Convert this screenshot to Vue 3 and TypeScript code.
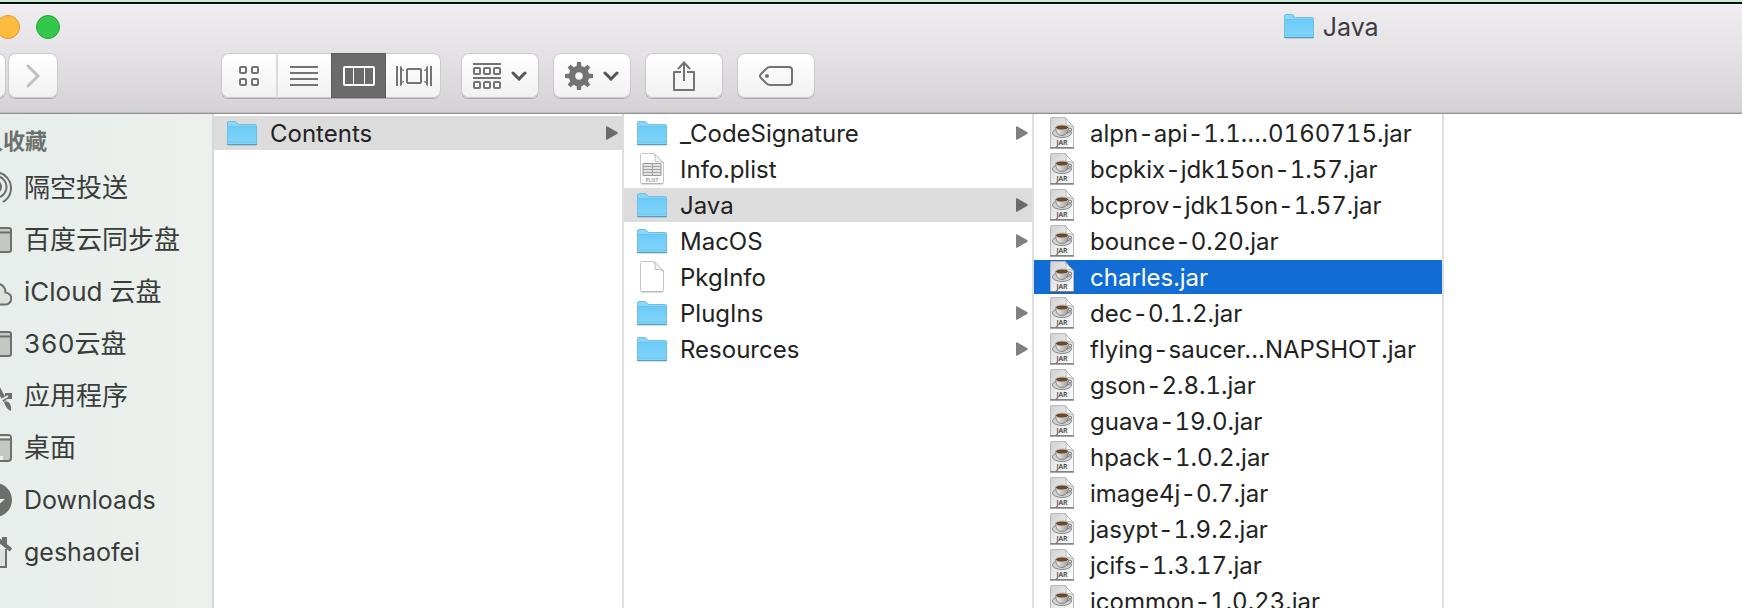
<script setup lang="ts">
import { ref } from 'vue'

type Kind = 'folder' | 'plist' | 'blank' | 'jar'
interface Entry {
  name: string
  kind: Kind
}
interface Column {
  label: string
  selected: string
  active: boolean
  entries: Entry[]
}
interface Place {
  name: string
  icon: 'airdrop' | 'drive' | 'cloud' | 'apps' | 'desktop' | 'downloads' | 'home'
  latin?: boolean
}

const places: Place[] = [
  { name: '隔空投送', icon: 'airdrop' },
  { name: '百度云同步盘', icon: 'drive' },
  { name: 'iCloud 云盘', icon: 'cloud' },
  { name: '360云盘', icon: 'drive' },
  { name: '应用程序', icon: 'apps' },
  { name: '桌面', icon: 'desktop' },
  { name: 'Downloads', icon: 'downloads', latin: true },
  { name: 'geshaofei', icon: 'home', latin: true },
]

const jars = [
  'alpn-api-1.1.…0160715.jar',
  'bcpkix-jdk15on-1.57.jar',
  'bcprov-jdk15on-1.57.jar',
  'bounce-0.20.jar',
  'charles.jar',
  'dec-0.1.2.jar',
  'flying-saucer…NAPSHOT.jar',
  'gson-2.8.1.jar',
  'guava-19.0.jar',
  'hpack-1.0.2.jar',
  'image4j-0.7.jar',
  'jasypt-1.9.2.jar',
  'jcifs-1.3.17.jar',
  'jcommon-1.0.23.jar',
]

const columns = ref<Column[]>([
  {
    label: 'Charles',
    selected: 'Contents',
    active: false,
    entries: [{ name: 'Contents', kind: 'folder' }],
  },
  {
    label: 'Contents',
    selected: 'Java',
    active: false,
    entries: [
      { name: '_CodeSignature', kind: 'folder' },
      { name: 'Info.plist', kind: 'plist' },
      { name: 'Java', kind: 'folder' },
      { name: 'MacOS', kind: 'folder' },
      { name: 'PkgInfo', kind: 'blank' },
      { name: 'PlugIns', kind: 'folder' },
      { name: 'Resources', kind: 'folder' },
    ],
  },
  {
    label: 'Java',
    selected: 'charles.jar',
    active: true,
    entries: jars.map((name): Entry => ({ name, kind: 'jar' })),
  },
])

const teeth = [0, 45, 90, 135, 180, 225, 270, 315]
</script>

<template>
  <div class="screen">
    <svg class="defs" width="0" height="0" aria-hidden="true">
      <defs>
        <linearGradient id="folderFill" x1="0" y1="0" x2="0" y2="1">
          <stop offset="0" stop-color="#6ccbf7" />
          <stop offset="1" stop-color="#82d5fa" />
        </linearGradient>
        <linearGradient id="paperFill" x1="0" y1="0" x2="1" y2="1">
          <stop offset="0" stop-color="#cfcfcf" />
          <stop offset="0.6" stop-color="#f0f0f0" />
          <stop offset="1" stop-color="#ffffff" />
        </linearGradient>
        <linearGradient id="cupFill" x1="0" y1="0" x2="1" y2="0">
          <stop offset="0" stop-color="#f4f4f4" />
          <stop offset="1" stop-color="#9a9a9a" />
        </linearGradient>
        <symbol id="folder" viewBox="0 0 30 25">
          <path d="M0.5 2Q0.5 0.5 2 0.5H8.5L11.5 3.5H28.5Q29.5 3.5 29.5 4.5V23.5H0.5Z" fill="#8ad6f8" stroke="#6fbfe2" />
          <path d="M1 5.5H29V23H1Z" fill="url(#folderFill)" />
          <path d="M1 5.5H29M1 21H29" stroke="#62bce8" fill="none" opacity="0.6" />
          <path d="M0 23.5H30" stroke="#4f9fc6" />
          <path d="M1 24.5H29" stroke="#000" opacity="0.12" />
        </symbol>
        <symbol id="blank" viewBox="0 0 24 32">
          <path d="M0.5 1.5Q0.5 0.5 1.5 0.5H14L23.5 10V29.5Q23.5 30.5 22.5 30.5H1.5Q0.5 30.5 0.5 29.5Z" fill="#fff" stroke="#c6c6c6" />
          <path d="M14 0.5Q16 4 15 8.5Q20 8 23.5 10Z" fill="#f6f6f6" stroke="#c0c0c0" />
          <path d="M1 31H23" stroke="#8f8f8f" opacity="0.6" />
        </symbol>
        <symbol id="plist" viewBox="0 0 24 32">
          <path d="M0.5 1.5Q0.5 0.5 1.5 0.5H14L23.5 10V29.5Q23.5 30.5 22.5 30.5H1.5Q0.5 30.5 0.5 29.5Z" fill="#fff" stroke="#c6c6c6" />
          <path d="M14 0.5Q16 4 15 8.5Q20 8 23.5 10Z" fill="#f6f6f6" stroke="#c0c0c0" />
          <path d="M3 10.5H21V22.5H3Z" fill="#e4e4e4" stroke="#999" />
          <path d="M3 13.5H21M3 16.5H21M3 19.5H21M12.5 10V23" stroke="#a3a3a3" fill="none" />
          <text x="12" y="29" class="tag plist-tag">PLIST</text>
          <path d="M1 31H23" stroke="#8f8f8f" opacity="0.6" />
        </symbol>
        <symbol id="jar" viewBox="0 0 24 32">
          <path d="M0.5 1.5Q0.5 0.5 1.5 0.5H15L23.5 10V30.5H0.5Z" fill="url(#paperFill)" stroke="#b9b9b9" />
          <path d="M15 0.5Q17 4 16 8.5Q20 8 23.5 10Z" fill="#fff" stroke="#b5b5b5" />
          <ellipse cx="12" cy="16" rx="9.5" ry="4.5" fill="#d2d2d2" stroke="#868686" />
          <path d="M17 11.5Q22 10.500 21.500 13Q20.5 15.500 16 16" fill="none" stroke="#8a8a8a" stroke-width="1.5" />
          <path d="M5.500 10.500Q6 18.500 12 18.500Q18 18.500 18.500 10.500Z" fill="url(#cupFill)" stroke="#858585" />
          <ellipse cx="12" cy="10.500" rx="6.500" ry="2.500" fill="#6b4a28" stroke="#bdbdbd" />
          <text x="12" y="28" class="tag">JAR</text>
          <path d="M0 31H24" stroke="#4c4c4c" />
        </symbol>
      </defs>
    </svg>

    <div class="window">
      <header class="chrome">
        <div class="titlebar">
          <div class="lights">
            <button class="light red" aria-label="Close"></button>
            <button class="light yellow" aria-label="Minimize"></button>
            <button class="light green" aria-label="Zoom"></button>
          </div>
          <h1 class="title">
            <svg class="folder-icon" aria-hidden="true"><use href="#folder" /></svg>
            <span>Java</span>
          </h1>
        </div>

        <div class="toolbar">
          <div class="nav">
            <button class="tool nav-button" aria-label="Back">
              <svg width="14" height="24" viewBox="0 0 14 24"><path d="M12 2L2 12L12 22" class="nav-arrow" /></svg>
            </button>
            <button class="tool nav-button" aria-label="Forward">
              <svg width="14" height="24" viewBox="0 0 14 24"><path d="M2 2L12 12L2 22" class="nav-arrow" /></svg>
            </button>
          </div>

          <div class="segments" role="group" aria-label="View">
            <button class="segment" aria-label="Icons">
              <svg width="20" height="20" viewBox="0 0 20 20" class="line">
                <rect x="1" y="1" width="6" height="6" rx="1" />
                <rect x="13" y="1" width="6" height="6" rx="1" />
                <rect x="1" y="13" width="6" height="6" rx="1" />
                <rect x="13" y="13" width="6" height="6" rx="1" />
              </svg>
            </button>
            <button class="segment" aria-label="List">
              <svg width="28" height="20" viewBox="0 0 28 20" class="line"><path d="M0 1H28M0 7H28M0 13H28M0 19H28" /></svg>
            </button>
            <button class="segment on" aria-label="Columns" aria-pressed="true">
              <svg width="32" height="20" viewBox="0 0 32 20" class="line">
                <rect x="1" y="1" width="30" height="18" rx="1" />
                <path d="M10.500 1V19M21.500 1V19" stroke-width="1" />
              </svg>
            </button>
            <button class="segment" aria-label="Cover Flow">
              <svg width="36" height="20" viewBox="0 0 36 20" class="line">
                <path d="M1 0V20M35 0V20" />
                <rect x="11" y="3" width="14" height="14" rx="1" />
                <path d="M4 0L6 1V3L8 4V5L6 4.500V15.500L8 15V16L6 17V19L4 20Z" class="solid" />
                <path d="M32 0L30 1V3L28 4V5L30 4.500V15.500L28 15V16L30 17V19L32 20Z" class="solid" />
              </svg>
            </button>
          </div>

          <div class="tools">
            <button class="tool" aria-label="Arrange">
              <svg width="28" height="26" viewBox="0 0 28 26" class="line">
                <path d="M0 1H28M0 15H28" />
                <rect x="1" y="5" width="6" height="6" rx="1" />
                <rect x="11" y="5" width="6" height="6" rx="1" />
                <rect x="21" y="5" width="6" height="6" rx="1" />
                <rect x="1" y="19" width="6" height="6" rx="1" />
                <rect x="11" y="19" width="6" height="6" rx="1" />
                <rect x="21" y="19" width="6" height="6" rx="1" />
              </svg>
              <svg width="16" height="10" viewBox="0 0 16 10"><path d="M2 2L8 8L14 2" class="drop" /></svg>
            </button>
            <button class="tool" aria-label="Action">
              <svg width="28" height="28" viewBox="0 0 28 28">
                <circle cx="14" cy="14" r="7" fill="none" stroke="#737373" stroke-width="6.500" />
                <path
                  v-for="angle in teeth"
                  :key="angle"
                  d="M11.500 5L12 0H16L16.500 5Z"
                  fill="#737373"
                  :transform="`rotate(${angle} 14 14)`"
                />
              </svg>
              <svg width="16" height="10" viewBox="0 0 16 10"><path d="M2 2L8 8L14 2" class="drop" /></svg>
            </button>
            <button class="tool" aria-label="Share">
              <svg width="22" height="30" viewBox="0 0 22 30" class="line">
                <path d="M8 11H1V29H21V11H14" stroke-linejoin="round" />
                <path d="M11 20V1M5 8L11 1.500L17 8" />
              </svg>
            </button>
            <button class="tool" aria-label="Tags">
              <svg width="34" height="20" viewBox="0 0 34 20" class="line">
                <path d="M11 1H30Q33 1 33 4V16Q33 19 30 19H11Q9 19 7.500 17.500L2 12Q0 10 2 8L7.500 2.500Q9 1 11 1Z" />
                <circle cx="8" cy="10" r="2" class="solid" />
              </svg>
            </button>
          </div>
        </div>
      </header>

      <div class="body">
        <nav class="sidebar" aria-label="个人收藏">
          <h2 class="heading">个人收藏</h2>
          <a v-for="place in places" :key="place.name" href="#" class="place" :class="{ latin: place.latin }">
            <svg width="34" height="34" viewBox="0 0 34 34" class="place-icon" aria-hidden="true">
              <g v-if="place.icon === 'airdrop'">
                <path d="M9 31A16 16 0 1 1 25 31" />
                <path d="M13 26A11 11 0 1 1 22 26" />
                <path d="M14 21A6 6 0 1 1 20 21" />
              </g>
              <g v-else-if="place.icon === 'drive'">
                <rect x="3" y="5" width="30" height="24" rx="2" class="shade" />
                <path d="M3 9.500H33" />
              </g>
              <path
                v-else-if="place.icon === 'cloud'"
                d="M8 29.500H27A6 6 0 0 0 27.500 17.500A9 9 0 0 0 11 12.500A6 6 0 0 0 6 18A6 6 0 0 0 8 29.500Z"
                class="tint"
              />
              <g v-else-if="place.icon === 'apps'">
                <path d="M6 29L18 5L27 22" stroke-width="4" />
                <path d="M8 17H19M27 17H34" stroke-width="6" />
                <path d="M23 21L30 17M24 25L31 21" stroke="#ebf0ed" />
                <path d="M26 23Q30 21 32 25Q34 28 33 32Q28 30 26 23Z" class="solid-place" />
              </g>
              <g v-else-if="place.icon === 'desktop'">
                <rect x="3" y="4" width="30" height="26" rx="3" class="shade" />
                <path d="M4 5.500H32V7.500H4Z" fill="#ebf0ed" stroke="none" />
                <path d="M3 8.500H33" />
                <path d="M12 25H25V29H12Z" fill="#ebf0ed" stroke="none" />
              </g>
              <g v-else-if="place.icon === 'downloads'">
                <circle cx="17" cy="17" r="17" class="solid-place" />
                <path d="M13 8H21V16H27L17 25L7 16H13Z" fill="#ebf0ed" stroke="none" />
              </g>
              <g v-else>
                <path d="M6 16V32H28V14" class="tint" />
                <path d="M1 15L17 2L33 15" stroke-width="4" />
                <path d="M24 2H29V12L24 8Z" class="solid-place" />
              </g>
            </svg>
            <span>{{ place.name }}</span>
          </a>
        </nav>

        <section v-for="column in columns" :key="column.label" class="column" :aria-label="column.label">
          <button
            v-for="entry in column.entries"
            :key="entry.name"
            class="row"
            :class="{ selected: entry.name === column.selected, active: column.active && entry.name === column.selected }"
            @click="column.selected = entry.name"
          >
            <span class="icon-cell">
              <svg :class="entry.kind === 'folder' ? 'folder-icon' : 'file-icon'" aria-hidden="true">
                <use :href="'#' + entry.kind" />
              </svg>
            </span>
            <span class="name">{{ entry.name }}</span>
            <svg v-if="entry.kind === 'folder'" class="arrow" width="12" height="14" viewBox="0 0 12 14" aria-hidden="true">
              <path d="M0 1Q0 0 1 0.300L11.500 6.300Q12 7 11.500 7.700L1 13.700Q0 14 0 13Z" />
            </svg>
          </button>
        </section>
        <div class="rest"></div>
      </div>
    </div>
  </div>
</template>

<style>
body {
  margin: 0;
  overflow: hidden;
}
</style>

<style scoped>
.screen {
  height: 100vh;
  box-sizing: border-box;
  padding-top: 2px;
  overflow: hidden;
  background: #cfe9d6;
  font-family: Inter, 'Noto Sans CJK SC', sans-serif;
  font-size: 24px;
  font-variant-numeric: tabular-nums;
  color: #222;
}
.defs {
  display: block;
}
.tag {
  font: 600 7px 'Open Sans', sans-serif;
  text-anchor: middle;
  fill: #333;
}
.plist-tag {
  font-size: 5px;
  fill: #888;
}
button {
  box-sizing: border-box;
  font: inherit;
  font-variant-numeric: inherit;
  color: inherit;
  border: 0;
  padding: 0;
  margin: 0;
}

/* The window hangs past the left edge of the screen. */
.window {
  height: 100%;
  box-sizing: border-box;
  margin-left: -44px;
  border-top: 2px solid #06100c;
  display: flex;
  flex-direction: column;
  background: #fff;
}
.chrome {
  flex: none;
  height: 110px;
  box-sizing: border-box;
  border-bottom: 1px solid #929094;
  background: linear-gradient(#efedf0, #e4e2e5 45%, #d4d2d5);
  box-shadow: inset 0 1px #f8f7f9, inset 0 -1px #bfbdc0;
}
.titlebar {
  display: flex;
  align-items: center;
  height: 45px;
}
.lights {
  display: flex;
  gap: 16px;
  width: 54%;
}
.light {
  width: 24px;
  height: 24px;
  border-radius: 50%;
}
.red {
  background: #fc605b;
  border: 1px solid #df4744;
}
.yellow {
  background: #fdbc40;
  border: 1px solid #dd9a2c;
}
.green {
  background: #34c84a;
  border: 1px solid #24a732;
}
.title {
  flex: 1;
  display: flex;
  align-items: center;
  justify-content: center;
  gap: 9px;
  margin: 0;
  font-size: 25px;
  font-weight: 400;
  color: #3e3b3f;
}
.toolbar {
  display: flex;
  padding-top: 4px;
}
.nav {
  display: flex;
  gap: 2px;
  margin-right: 163px;
}
.tool {
  width: 78px;
  height: 45px;
  display: flex;
  align-items: center;
  justify-content: center;
  gap: 10px;
  border-radius: 8px;
  background: linear-gradient(#fff, #f1f1f1);
  box-shadow: inset 0 0 0 1px #cbc9cc, 0 1px #aaa8ab;
}
.nav-button {
  width: 50px;
}
.nav-arrow {
  fill: none;
  stroke: #c0c0c0;
  stroke-width: 3;
  stroke-linecap: round;
}
.segments {
  display: flex;
  margin-right: 20px;
  border-radius: 8px;
  background: linear-gradient(#fff, #f1f1f1);
  box-shadow: inset 0 0 0 1px #cbc9cc, 0 1px #aaa8ab;
}
.segment {
  width: 55px;
  height: 45px;
  display: flex;
  align-items: center;
  justify-content: center;
  background: none;
}
.segment + .segment {
  box-shadow: inset 2px 0 #dcdbdc;
}
.segment.on {
  background: #6b6b6b;
  box-shadow: inset 0 0 0 1px #5c5c5c;
}
.segment.on + .segment {
  box-shadow: none;
}
.tools {
  display: flex;
  gap: 14px;
}
.line {
  fill: none;
  stroke: #737373;
  stroke-width: 2;
}
.on .line {
  stroke: #fff;
}
.solid {
  fill: #737373;
  stroke: none;
}
.drop {
  fill: none;
  stroke: #555;
  stroke-width: 3;
  stroke-linecap: round;
}

.body {
  flex: 1;
  min-height: 0;
  display: flex;
}
.sidebar {
  flex: none;
  width: 258px;
  box-sizing: border-box;
  border-right: 2px solid #d6dad7;
  background: linear-gradient(90deg, #e7edea, #ecf1ee);
}
.heading {
  margin: 0;
  padding: 7px 0 1px 3px;
  line-height: 40px;
  font-size: 22px;
  font-weight: 700;
  color: #6c716e;
}
.place {
  display: flex;
  align-items: center;
  gap: 12px;
  height: 52px;
  padding-left: 22px;
  font-size: 26px;
  line-height: 34px;
  color: #393d3a;
  text-decoration: none;
  white-space: nowrap;
}
.latin {
  font-size: 25px;
}
.place-icon {
  flex: none;
  fill: none;
  stroke: #6b706d;
  stroke-width: 2;
}
.shade {
  fill: #c3c8c5;
}
.tint {
  fill: #dde2df;
}
.solid-place {
  fill: #6b706d;
  stroke: none;
}

.column {
  flex: none;
  width: 410px;
  box-sizing: border-box;
  padding-top: 2px;
  display: flex;
  flex-direction: column;
  gap: 2px;
  border-right: 2px solid #dedede;
  overflow: hidden;
}
.row {
  flex: none;
  height: 34px;
  display: flex;
  align-items: center;
  padding: 0 4px 0 13px;
  background: none;
  text-align: left;
  white-space: nowrap;
}
.selected {
  background: #dcdcdc;
}
.active {
  background: #116cd6;
  color: #fff;
}
.icon-cell {
  width: 30px;
  margin-right: 13px;
  display: flex;
  justify-content: center;
}
.folder-icon {
  width: 30px;
  height: 25px;
}
.file-icon {
  width: 24px;
  height: 32px;
}
.name {
  flex: 1;
}
.arrow {
  fill: #808080;
}
.selected .arrow {
  fill: #6b6b6b;
}
.rest {
  flex: 1;
}
</style>
